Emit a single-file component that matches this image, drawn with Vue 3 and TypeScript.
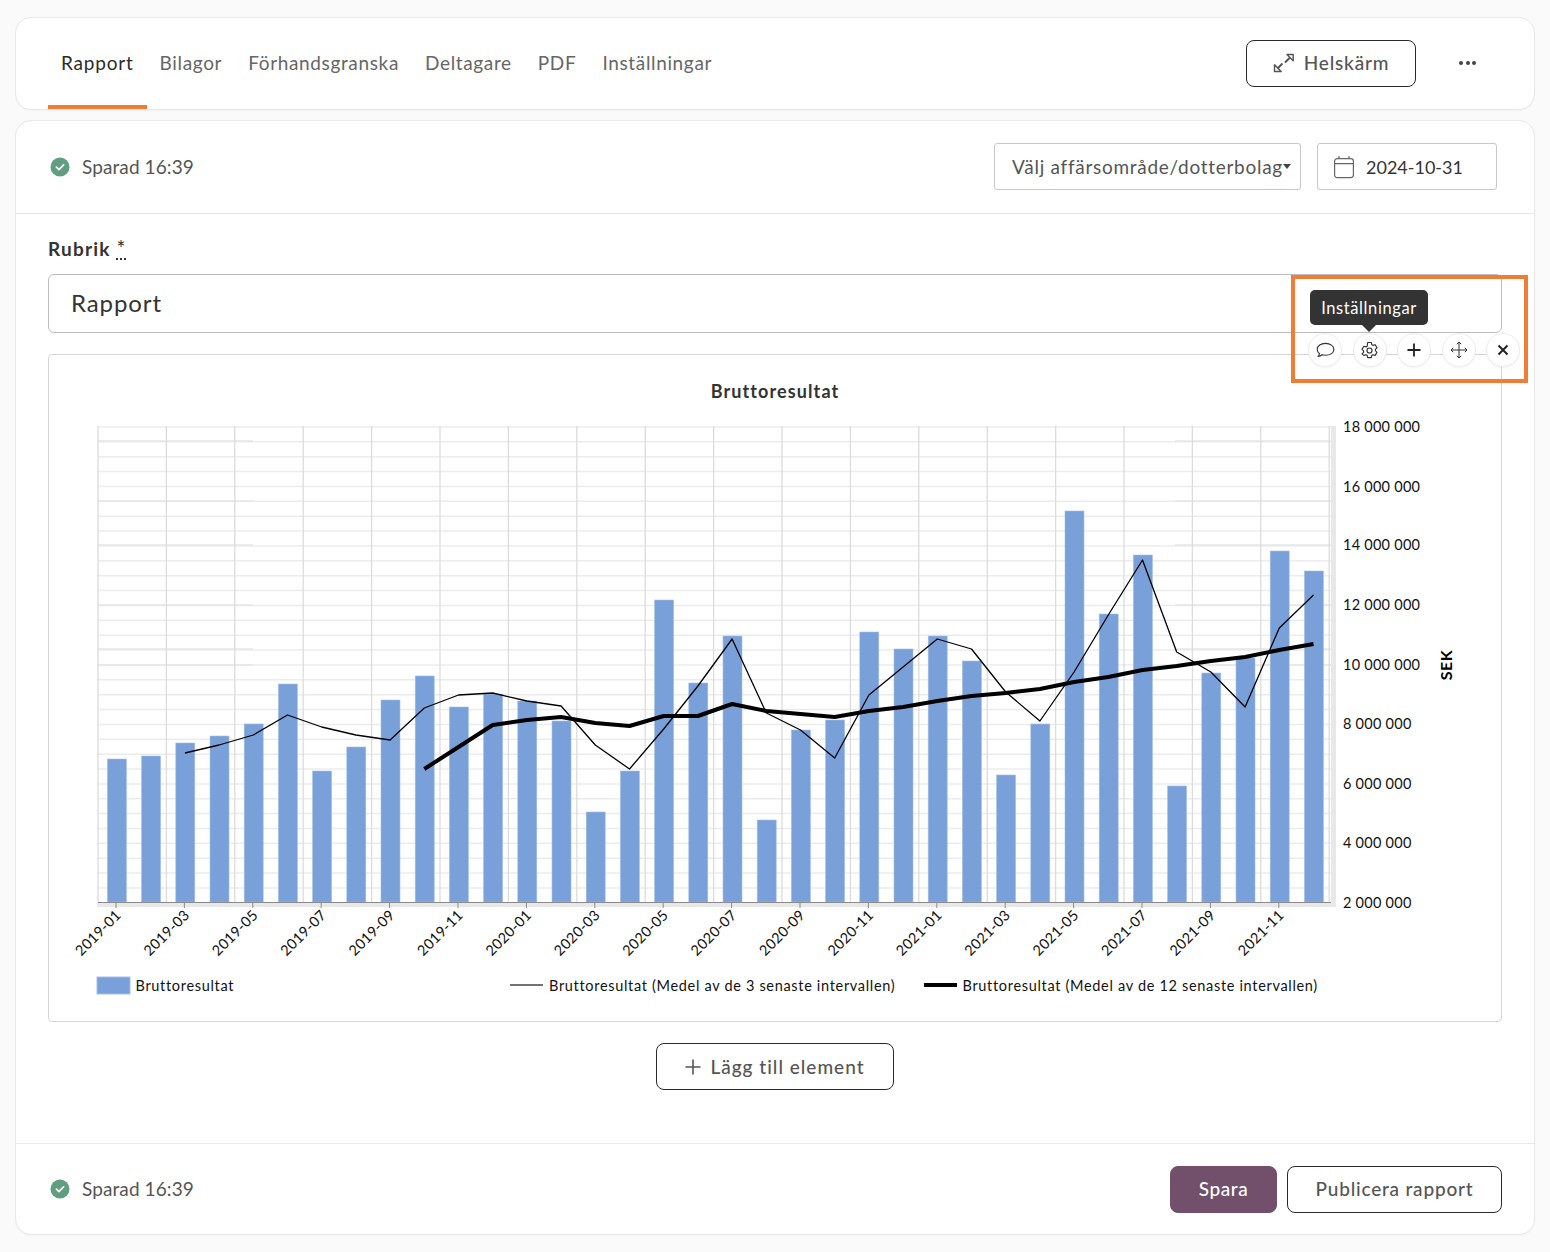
<template>
  <div class="page">
    <nav class="card topbar">
      <div class="tabs">
        <a v-for="tab in tabs" :key="tab" class="tab" :class="{ active: tab === 'Rapport' }">{{ tab }}</a>
      </div>
      <div class="top-actions">
        <button class="btn fullscreen">
          <svg width="22" height="20" viewBox="0 0 22 20" fill="none" stroke="#555" stroke-width="1.4" stroke-linejoin="round">
            <path d="M14 1.500h6.200v6.200z" />
            <path d="M16.500 5 12 9.500" stroke-width="2" />
            <path d="M1.500 11.800v6.700h6.700z" />
            <path d="M4.500 15.500 9.500 10.500" stroke-width="2" />
          </svg>
          <span>Helskärm</span>
        </button>
        <span class="more"><i></i><i></i><i></i></span>
      </div>
    </nav>

    <main class="card report">
      <header class="report-head">
        <div class="saved">
          <svg width="20" height="20" viewBox="0 0 20 20"><circle cx="10" cy="10" r="9.500" fill="#5f9f80" /><path d="M6.400 10.200 8.900 12.600 13.600 7.900" fill="none" stroke="#fff" stroke-width="1.700" stroke-linecap="round" stroke-linejoin="round" /></svg>
          <span>Sparad 16:39</span>
        </div>
        <div class="filters">
          <div class="field select">Välj affärsområde/dotterbolag<span class="caret"></span></div>
          <div class="field date">
            <svg width="22" height="24" viewBox="0 0 22 24" fill="none" stroke="#666" stroke-width="1.200"><rect x="1.600" y="3.600" width="18.800" height="19" rx="2.500" /><path d="M1.600 8.600h18.800M6 1v3M16 1v3" /></svg>
            <span>2024-10-31</span>
          </div>
        </div>
      </header>

      <section class="body">
        <label class="rubrik">Rubrik <abbr>*</abbr></label>
        <div class="title-input">Rapport</div>

        <div class="chart-box">
          <svg class="chart" width="1452" height="665" viewBox="49 355 1452 665">
            <text x="775" y="398" text-anchor="middle" class="chart-title">Bruttoresultat</text>

            <g stroke="#ececec" stroke-width="1.500">
              <line v-for="y in hLines" :key="y" x1="98" x2="1331" :y1="y" :y2="y" />
            </g>
            <g stroke="#e6e6e6" stroke-width="1.500">
              <template v-for="y in accentLines" :key="y">
                <line x1="98" x2="253" :y1="y" :y2="y" />
                <line x1="1175" x2="1331" :y1="y" :y2="y" />
              </template>
            </g>
            <g stroke="#dcdcdc" stroke-width="1.300">
              <line v-for="x in vLines" :key="x" :x1="x" :x2="x" y1="426" y2="907" />
            </g>
            <rect x="98" y="903" width="1238" height="4" fill="#e8e8e8" />
            <rect x="1331" y="426" width="5" height="481" fill="#e8e8e8" />

            <rect v-for="b in bars" :key="b.x" :x="b.x" :y="b.y" width="19" :height="902 - b.y" fill="#7aa0d9" stroke="#a4bfe6" stroke-width="0.600" />
            <line x1="98" x2="1331" y1="902.500" y2="902.500" stroke="#8a8a8a" stroke-width="1" />
            <line v-for="t in ticks" :key="t.label" :x1="t.x" :x2="t.x" y1="903" y2="908" stroke="#8a8a8a" />

            <polyline :points="avg3" fill="none" stroke="#000" stroke-width="1.300" stroke-linejoin="round" />
            <polyline :points="avg12" fill="none" stroke="#000" stroke-width="4" stroke-linejoin="round" />

            <text v-for="t in ticks" :key="t.label" class="axis" text-anchor="end" :transform="`translate(${t.x + 6} 916) rotate(-45)`">{{ t.label }}</text>
            <text v-for="l in yLabels" :key="l.text" class="axis" x="1343" :y="l.y + 5">{{ l.text }}</text>
            <text class="sek" transform="translate(1452 665) rotate(-90)" text-anchor="middle">SEK</text>

            <rect x="97" y="977" width="33" height="17" fill="#7aa0d9" stroke="#a4bfe6" />
            <text class="legend" x="135.500" y="991">Bruttoresultat</text>
            <line x1="510" x2="543" y1="985" y2="985" stroke="#444" stroke-width="1.300" />
            <text class="legend" x="549" y="991">Bruttoresultat (Medel av de 3 senaste intervallen)</text>
            <line x1="924" x2="957" y1="985" y2="985" stroke="#000" stroke-width="4" />
            <text class="legend" x="962.500" y="991">Bruttoresultat (Medel av de 12 senaste intervallen)</text>
          </svg>
        </div>

        <div class="add-row">
          <button class="btn add">
            <svg width="16" height="16" viewBox="0 0 16 16" stroke="#555" stroke-width="1.600"><path d="M8 .5v15M.5 8h15" /></svg>
            Lägg till element
          </button>
        </div>
      </section>

      <footer class="report-foot">
        <div class="saved">
          <svg width="20" height="20" viewBox="0 0 20 20"><circle cx="10" cy="10" r="9.500" fill="#5f9f80" /><path d="M6.400 10.200 8.900 12.600 13.600 7.900" fill="none" stroke="#fff" stroke-width="1.700" stroke-linecap="round" stroke-linejoin="round" /></svg>
          <span>Sparad 16:39</span>
        </div>
        <div class="foot-actions">
          <button class="btn primary">Spara</button>
          <button class="btn publish">Publicera rapport</button>
        </div>
      </footer>

      <div class="element-tools">
        <div class="tooltip">Inställningar</div>
        <div class="tool-row">
          <span class="tool">
            <svg width="20" height="20" viewBox="0 0 18 18" fill="none" stroke="#333" stroke-width="1"><path d="M9.500 3C5.300 3 2 5.300 2 8.500c0 1.500.8 2.800 2 3.700-.1 1-.6 2-1.300 2.500 1.500 0 2.800-.6 3.700-1.400.9.300 2 .4 3.100.4 4.200 0 7.500-2.200 7.500-5.200S13.700 3 9.500 3z" stroke-linejoin="round" /></svg>
          </span>
          <span class="tool">
            <svg width="19" height="19" viewBox="0 0 18 18" fill="none" stroke="#333" stroke-width="1.100" stroke-linejoin="round"><path d="M7.300 1.800h3.400l.5 2.100 1.100.6 2.100-.6 1.700 2.900-1.500 1.500v1.300l1.500 1.500-1.700 2.900-2.100-.6-1.100.6-.5 2.100H7.300l-.5-2.100-1.100-.6-2.100.6L1.900 12.600l1.500-1.500V9.800L1.900 8.300 3.600 5.400l2.100.6 1.100-.6z" transform="translate(0 -.4)" /><circle cx="9" cy="9" r="2.400" /></svg>
          </span>
          <span class="tool">
            <svg width="18" height="18" viewBox="0 0 18 18" stroke="#222" stroke-width="1.800"><path d="M9 2.500v13M2.500 9h13" /></svg>
          </span>
          <span class="tool">
            <svg width="18" height="18" viewBox="0 0 18 18" fill="none" stroke="#333" stroke-width="1"><path d="M9 1v16M1 9h16" /><path d="M6.800 3.200 9 1l2.200 2.200M6.800 14.800 9 17l2.200-2.200M3.200 6.800 1 9l2.200 2.200M14.800 6.800 17 9l-2.200 2.200" /></svg>
          </span>
          <span class="tool">
            <svg width="18" height="18" viewBox="0 0 18 18" stroke="#222" stroke-width="2"><path d="M4.500 4.500l9 9M13.500 4.500l-9 9" /></svg>
          </span>
        </div>
      </div>
    </main>
  </div>
</template>

<script setup lang="ts">
const tabs = ['Rapport', 'Bilagor', 'Förhandsgranska', 'Deltagare', 'PDF', 'Inställningar']

const barTops = [759, 756, 743, 736, 724, 684, 771, 747, 700, 676, 707, 694, 701, 721, 812, 771, 600, 683, 636, 820, 730, 720, 632, 649, 636, 661, 775, 724, 511, 614, 555, 786, 673, 658, 551, 571]
const step = 34.2
const bars = barTops.map((y, i) => ({ x: 107.4 + step * i, y }))

const centerX = (i: number) => (116.5 + step * i).toFixed(1)

const avg3Y = [753, 745, 735, 715, 727, 735, 740, 708, 695, 693, 701, 706, 745, 769, 729, 686, 639, 713, 730, 758, 695, 667, 639, 649, 692, 721, 672, 615, 560, 652, 672, 707, 628, 595]
const avg3 = avg3Y.map((y, i) => `${centerX(i + 2)},${y}`).join(' ')

const avg12Y = [769, 747, 725, 720, 717, 723, 726, 716, 716, 704, 711, 714, 717, 711, 707, 701, 696, 693, 689, 682, 677, 670, 666, 661, 657, 650, 644]
const avg12 = avg12Y.map((y, i) => `${centerX(i + 9)},${y}`).join(' ')

const hLines = Array.from({ length: 32 }, (_, i) => 427 + i * 14.87)
const accentLines = [441, 501, 545, 605, 649, 665]
const vLines = Array.from({ length: 19 }, (_, i) => 98 + i * 68.4)

const tickLabels = ['2019-01', '2019-03', '2019-05', '2019-07', '2019-09', '2019-11', '2020-01', '2020-03', '2020-05', '2020-07', '2020-09', '2020-11', '2021-01', '2021-03', '2021-05', '2021-07', '2021-09', '2021-11']
const ticks = tickLabels.map((label, i) => ({ label, x: 116 + 68.4 * i }))

const yLabels = [
  { text: '18 000 000', y: 427 },
  { text: '16 000 000', y: 487 },
  { text: '14 000 000', y: 545 },
  { text: '12 000 000', y: 605 },
  { text: '10 000 000', y: 665 },
  { text: '8 000 000', y: 724 },
  { text: '6 000 000', y: 784 },
  { text: '4 000 000', y: 843 },
  { text: '2 000 000', y: 903 }
]
</script>

<style>
body {
  background: #fafafa;
}
</style>

<style scoped>
.page {
  width: 1550px;
  height: 1252px;
  padding: 17px 15px 0;
  box-sizing: border-box;
  font-family: "Lato", "Noto Sans", sans-serif;
  color: #333;
}

.card {
  background: #fff;
  border: 1px solid #e8e8e8;
  border-radius: 16px;
  box-shadow: 0 1px 2px rgba(0, 0, 0, 0.03);
}

.topbar {
  height: 93px;
  box-sizing: border-box;
  display: flex;
  justify-content: space-between;
  padding: 0 58px 0 32px;
}

.tabs {
  display: flex;
}

.tab {
  padding: 0 13px 1px;
  line-height: 90px;
  height: 91px;
  box-sizing: border-box;
  font-size: 19px;
  letter-spacing: 0.65px;
  color: #666;
}

.tab.active {
  color: #2b2b2b;
  letter-spacing: 0.8px;
  border-bottom: 4px solid #ef7d35;
}

.top-actions {
  display: flex;
  align-items: center;
  gap: 43px;
  padding-bottom: 1px;
}

.btn {
  font-family: inherit;
  font-size: 19px;
  font-weight: 500;
  letter-spacing: 0.8px;
  height: 47px;
  border: 1px solid #2a2a2a;
  border-radius: 8px;
  background: #fff;
  color: #555;
  display: inline-flex;
  align-items: center;
  justify-content: center;
  gap: 9px;
  padding: 0;
  box-sizing: border-box;
}

.fullscreen {
  width: 170px;
}

.fullscreen span {
  margin-bottom: 2px;
}

.more {
  display: flex;
  gap: 2.500px;
  width: 17px;
}

.more i {
  width: 4px;
  height: 4px;
  border-radius: 50%;
  background: #444;
}

.report {
  position: relative;
  margin-top: 10px;
  height: 1115px;
  box-sizing: border-box;
  display: flex;
  flex-direction: column;
}

.report-head {
  height: 93px;
  box-sizing: border-box;
  border-bottom: 1px solid #e8e8e8;
  display: flex;
  align-items: center;
  justify-content: space-between;
  padding: 0 37px 1px 34px;
}

.saved {
  display: flex;
  align-items: center;
  gap: 12px;
  font-size: 19px;
  letter-spacing: 0.1px;
  color: #555;
}

.filters {
  display: flex;
  gap: 16px;
}

.field {
  height: 47px;
  box-sizing: border-box;
  border: 1px solid #c8c8c8;
  border-radius: 3px;
  display: flex;
  align-items: center;
  font-size: 19px;
  letter-spacing: 0.72px;
  color: #555;
}

.select {
  width: 307px;
  padding-left: 17px;
  position: relative;
}

.caret {
  border: 4.500px solid transparent;
  border-top: 5px solid #444;
  border-bottom: 0;
}

.date {
  width: 180px;
  padding-left: 15px;
  gap: 11px;
  font-size: 18px;
  letter-spacing: 0;
  color: #333;
}

.body {
  flex: 1;
  padding: 24px 32px 0;
}

.rubrik {
  display: block;
  height: 21px;
  font-size: 19px;
  font-weight: 700;
  letter-spacing: 1.200px;
  line-height: 21px;
  color: #333;
}

.rubrik abbr {
  text-decoration: underline dotted;
  font-weight: 400;
  font-size: 21px;
  line-height: 0;
}

.title-input {
  margin-top: 15px;
  height: 59px;
  box-sizing: border-box;
  border: 1px solid #bdbdbd;
  border-radius: 6px;
  padding: 0 0 2px 22px;
  display: flex;
  align-items: center;
  font-size: 24px;
  letter-spacing: 0.9px;
  color: #333;
}

.chart-box {
  margin-top: 21px;
  height: 668px;
  box-sizing: border-box;
  border: 1px solid #d6d6d6;
  border-radius: 4px;
}

.chart {
  display: block;
}

.chart-title {
  font-size: 18px;
  font-weight: 700;
  letter-spacing: 1.100px;
  fill: #333;
}

.axis {
  font-size: 14.500px;
  letter-spacing: 0.25px;
  fill: #111;
}

.legend {
  font-size: 14.500px;
  letter-spacing: 0.68px;
  fill: #111;
}

.sek {
  font-size: 16px;
  font-weight: 700;
  letter-spacing: 0.5px;
  fill: #000;
}

.add-row {
  display: flex;
  justify-content: center;
  margin-top: 21px;
}

.add {
  width: 238px;
  letter-spacing: 1px;
}

.report-foot {
  height: 91px;
  box-sizing: border-box;
  border-top: 1px solid #e8e8e8;
  display: flex;
  align-items: center;
  justify-content: space-between;
  padding: 0 32px 0 34px;
}

.report-foot .saved span {
  margin-bottom: 2px;
}

.foot-actions {
  display: flex;
  gap: 10px;
}

.primary {
  width: 107px;
  background: #72506b;
  border-color: #72506b;
  color: #fff;
  letter-spacing: 0.6px;
  padding-bottom: 2px;
}

.publish {
  width: 215px;
  padding-bottom: 2px;
}

.element-tools {
  position: absolute;
  left: 1275px;
  top: 154px;
  width: 237px;
  height: 108px;
  box-sizing: border-box;
  border: 4px solid #ef7d35;
}

.tooltip {
  position: absolute;
  left: 15px;
  top: 11px;
  width: 118px;
  height: 35px;
  border-radius: 5px;
  background: #333;
  color: #fff;
  font-size: 16.500px;
  letter-spacing: 0.6px;
  display: flex;
  align-items: center;
  justify-content: center;
}

.tooltip::after {
  content: "";
  position: absolute;
  left: 50%;
  bottom: -7px;
  margin-left: -7px;
  border: 7px solid transparent;
  border-top-color: #333;
  border-bottom: 0;
}

.tool-row {
  position: absolute;
  left: 13px;
  top: 54px;
  display: flex;
  gap: 10.500px;
}

.tool {
  width: 34px;
  height: 34px;
  border-radius: 50%;
  background: #fff;
  border: 1px solid #eee;
  box-sizing: border-box;
  display: flex;
  align-items: center;
  justify-content: center;
  box-shadow: 0 1px 2px rgba(0, 0, 0, 0.05);
}
</style>
